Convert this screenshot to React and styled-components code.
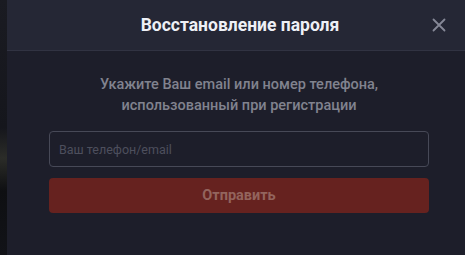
import React from 'react'
import styled, { createGlobalStyle } from 'styled-components'

const Global = createGlobalStyle`
  html, body {
    margin: 0;
    padding: 0;
    background: #14151d;
    overflow: hidden;
  }
  body {
    font-family: Roboto, "Liberation Sans", Arial, sans-serif;
  }
`

const Page = styled.div`
  display: flex;
  width: 465px;
  height: 255px;
  overflow: hidden;
`

const Backdrop = styled.div`
  flex: 0 0 7px;
  background: linear-gradient(180deg, #1a1b22 0%, #15161c 50%, #2b2c28 62%, #0e0f12 75%, #121318 100%);
`

const Modal = styled.div`
  flex: 0 0 466px;
  display: flex;
  flex-direction: column;
  background: #1d1e2a;
`

const Header = styled.div`
  position: relative;
  height: 50px;
  display: flex;
  align-items: center;
  justify-content: center;
  background: #252735;
  border-bottom: 1px solid #313342;
`

const Title = styled.h2`
  margin: 0;
  font-size: 17.5px;
  font-weight: 700;
  color: #eef0f6;
`

const Close = styled.button`
  position: absolute;
  right: 26px;
  top: 17px;
  width: 16px;
  height: 16px;
  padding: 0;
  border: 0;
  background: none;
  display: flex;
  cursor: pointer;
`

const Body = styled.div`
  display: flex;
  flex-direction: column;
  padding: 23px 44px 0 42px;
  gap: 11px;
`

const Hint = styled.p`
  margin: 0 0 4px;
  text-align: center;
  font-size: 14.5px;
  font-weight: 500;
  line-height: 21px;
  color: #81838f;
`

const Input = styled.input`
  box-sizing: border-box;
  height: 36px;
  width: 100%;
  padding: 0 9px;
  border: 1px solid #474957;
  border-radius: 4px;
  background: #1d1e2a;
  color: #c0c2cc;
  font-family: inherit;
  font-size: 12.5px;
  outline: none;
  &::placeholder {
    color: #4d4f5d;
  }
`

const Submit = styled.button`
  height: 35px;
  width: 100%;
  border: 0;
  border-radius: 4px;
  background: #66221f;
  color: #93645d;
  font-family: inherit;
  font-size: 14.5px;
  font-weight: 700;
  cursor: pointer;
`

export default function App() {
  return (
    <Page>
      <Global />
      <Backdrop />
      <Modal>
        <Header>
          <Title>Восстановление пароля</Title>
          <Close aria-label='close'>
            <svg width='16' height='16' viewBox='0 0 16 16'>
              <path d='M2.5 2.5 L13.5 13.5 M13.5 2.5 L2.5 13.5' stroke='#868897' strokeWidth='1.8' strokeLinecap='round' />
            </svg>
          </Close>
        </Header>
        <Body>
          <Hint>
            Укажите Ваш email или номер телефона,
            <br />
            использованный при регистрации
          </Hint>
          <Input placeholder='Ваш телефон/email' />
          <Submit>Отправить</Submit>
        </Body>
      </Modal>
    </Page>
  )
}
